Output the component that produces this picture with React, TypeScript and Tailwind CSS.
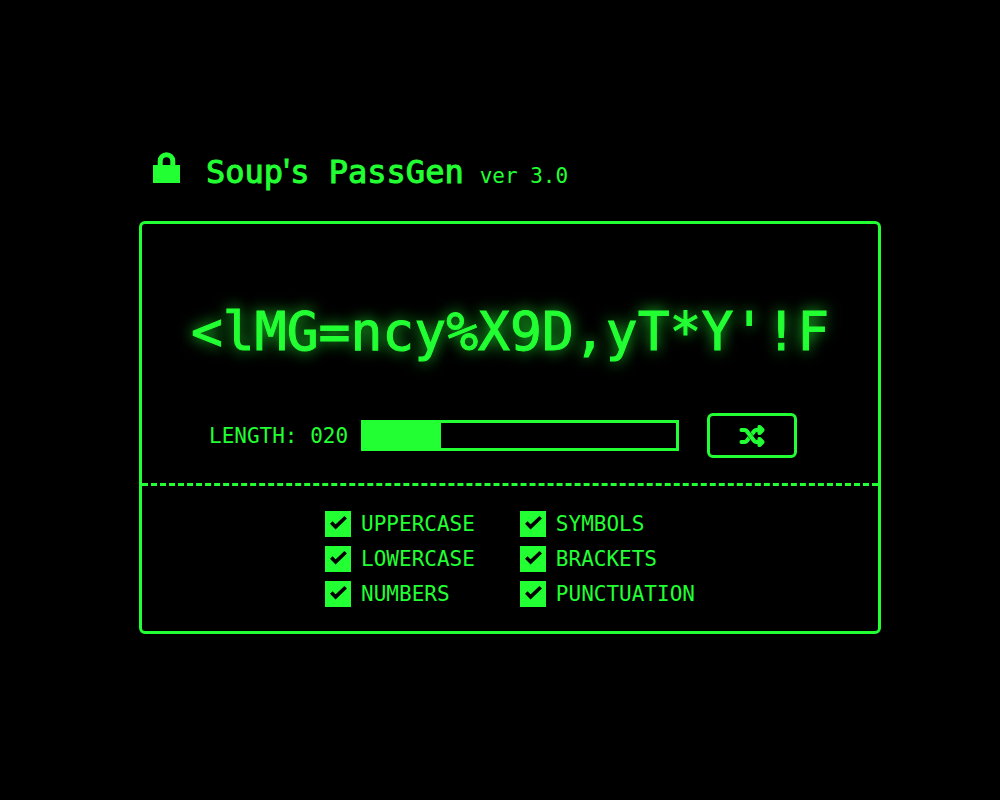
import { useState } from "react";
import { FaShuffle } from "react-icons/fa6";

const OPTIONS = ["UPPERCASE", "LOWERCASE", "NUMBERS", "SYMBOLS", "BRACKETS", "PUNCTUATION"];
const CHARS = "ABCDEFGHIJKLMNOPQRSTUVWXYZabcdefghijklmnopqrstuvwxyz0123456789!%*=.,'<>";
const MIN = 1;
const MAX = 78;

function LockIcon() {
  return (
    <svg className="w-[27px] h-[31px] shrink-0" viewBox="0 0 27 31" fill="none" aria-hidden="true">
      <path d="M0 13h27v18H0z" fill="currentColor" />
      <path d="M7.2 14V9a6.3 6.3 0 0 1 12.6 0v5" stroke="currentColor" strokeWidth="5" />
    </svg>
  );
}

function Option({ label }: { label: string }) {
  const [checked, setChecked] = useState(true);

  return (
    <label className="flex items-center gap-[10px] h-[26px] cursor-pointer">
      <span className="relative w-[26px] h-[26px] shrink-0">
        <input
          type="checkbox"
          checked={checked}
          onChange={(e) => setChecked(e.target.checked)}
          className="block appearance-none w-full h-full border-[3px] border-[#22ff33] checked:bg-[#22ff33]"
        />
        {checked && (
          <svg className="absolute inset-0 text-black pointer-events-none" viewBox="0 0 26 26" fill="none" aria-hidden="true">
            <path d="M6.3 11.5L10.6 15.9L20.7 6.2" stroke="currentColor" strokeWidth="3.6" />
          </svg>
        )}
      </span>
      <span>{label}</span>
    </label>
  );
}

export default function App() {
  const [length, setLength] = useState(20);
  const [password, setPassword] = useState("<lMG=ncy%X9D,yT*Y'!F");

  const generate = (size: number) => {
    let next = "";
    for (let i = 0; i < size; i++) {
      next += CHARS[Math.floor(Math.random() * CHARS.length)];
    }
    setPassword(next);
  };

  const filled = ((length - MIN) / (MAX - MIN)) * 100;

  return (
    <main className="min-h-screen flex items-center justify-center bg-black text-[#22ff33] font-['DejaVu_Sans_Mono',monospace] text-[21px] leading-[26px] pl-5 pb-[14px]">
      <div className="w-full max-w-[742px]">
        <header className="flex items-baseline px-[14px] mb-8">
          <LockIcon />
          <h1 className="ml-[26px] text-[32px] leading-8 [-webkit-text-stroke:1px_#22ff33]">
            Soup<span className="font-['Noto_Sans',sans-serif]">'</span>s PassGen
          </h1>
          <span className="ml-4">ver 3.0</span>
        </header>

        <section className="border-[3px] border-[#22ff33] rounded-md">
          <p className="pt-[76px] text-center text-[53px] leading-[64px] break-all [-webkit-text-stroke:1px_#22ff33] [text-shadow:0_0_15px_#22ff33]">
            {password}
          </p>

          <div className="flex items-center mt-[49px] pl-[67px] pr-[81px] pb-[25px]">
            <label htmlFor="length" className="shrink-0">
              LENGTH: {String(length).padStart(3, "0")}
            </label>
            <input
              id="length"
              type="range"
              min={MIN}
              max={MAX}
              value={length}
              onChange={(e) => {
                setLength(Number(e.target.value));
                generate(Number(e.target.value));
              }}
              className="appearance-none flex-1 min-w-0 h-[31px] ml-[13px] mr-7 border-[3px] border-[#22ff33] bg-no-repeat bg-origin-padding bg-linear-to-r from-[#22ff33] to-[#22ff33] cursor-pointer [&::-webkit-slider-thumb]:appearance-none [&::-webkit-slider-thumb]:w-0"
              style={{ backgroundSize: `${filled}% 100%` }}
            />
            <button
              type="button"
              aria-label="Shuffle"
              onClick={() => generate(length)}
              className="flex items-center justify-center w-[90px] h-[45px] shrink-0 border-[3px] border-[#22ff33] rounded-md cursor-pointer"
            >
              <FaShuffle className="w-6 h-6 overflow-visible stroke-[#22ff33] stroke-[24]" />
            </button>
          </div>

          <div className="grid grid-flow-col grid-rows-3 justify-center gap-x-[45px] gap-y-[9px] border-t-[3px] border-dashed border-[#22ff33] pt-[25px] pb-6">
            {OPTIONS.map((label) => (
              <Option key={label} label={label} />
            ))}
          </div>
        </section>
      </div>
    </main>
  );
}
